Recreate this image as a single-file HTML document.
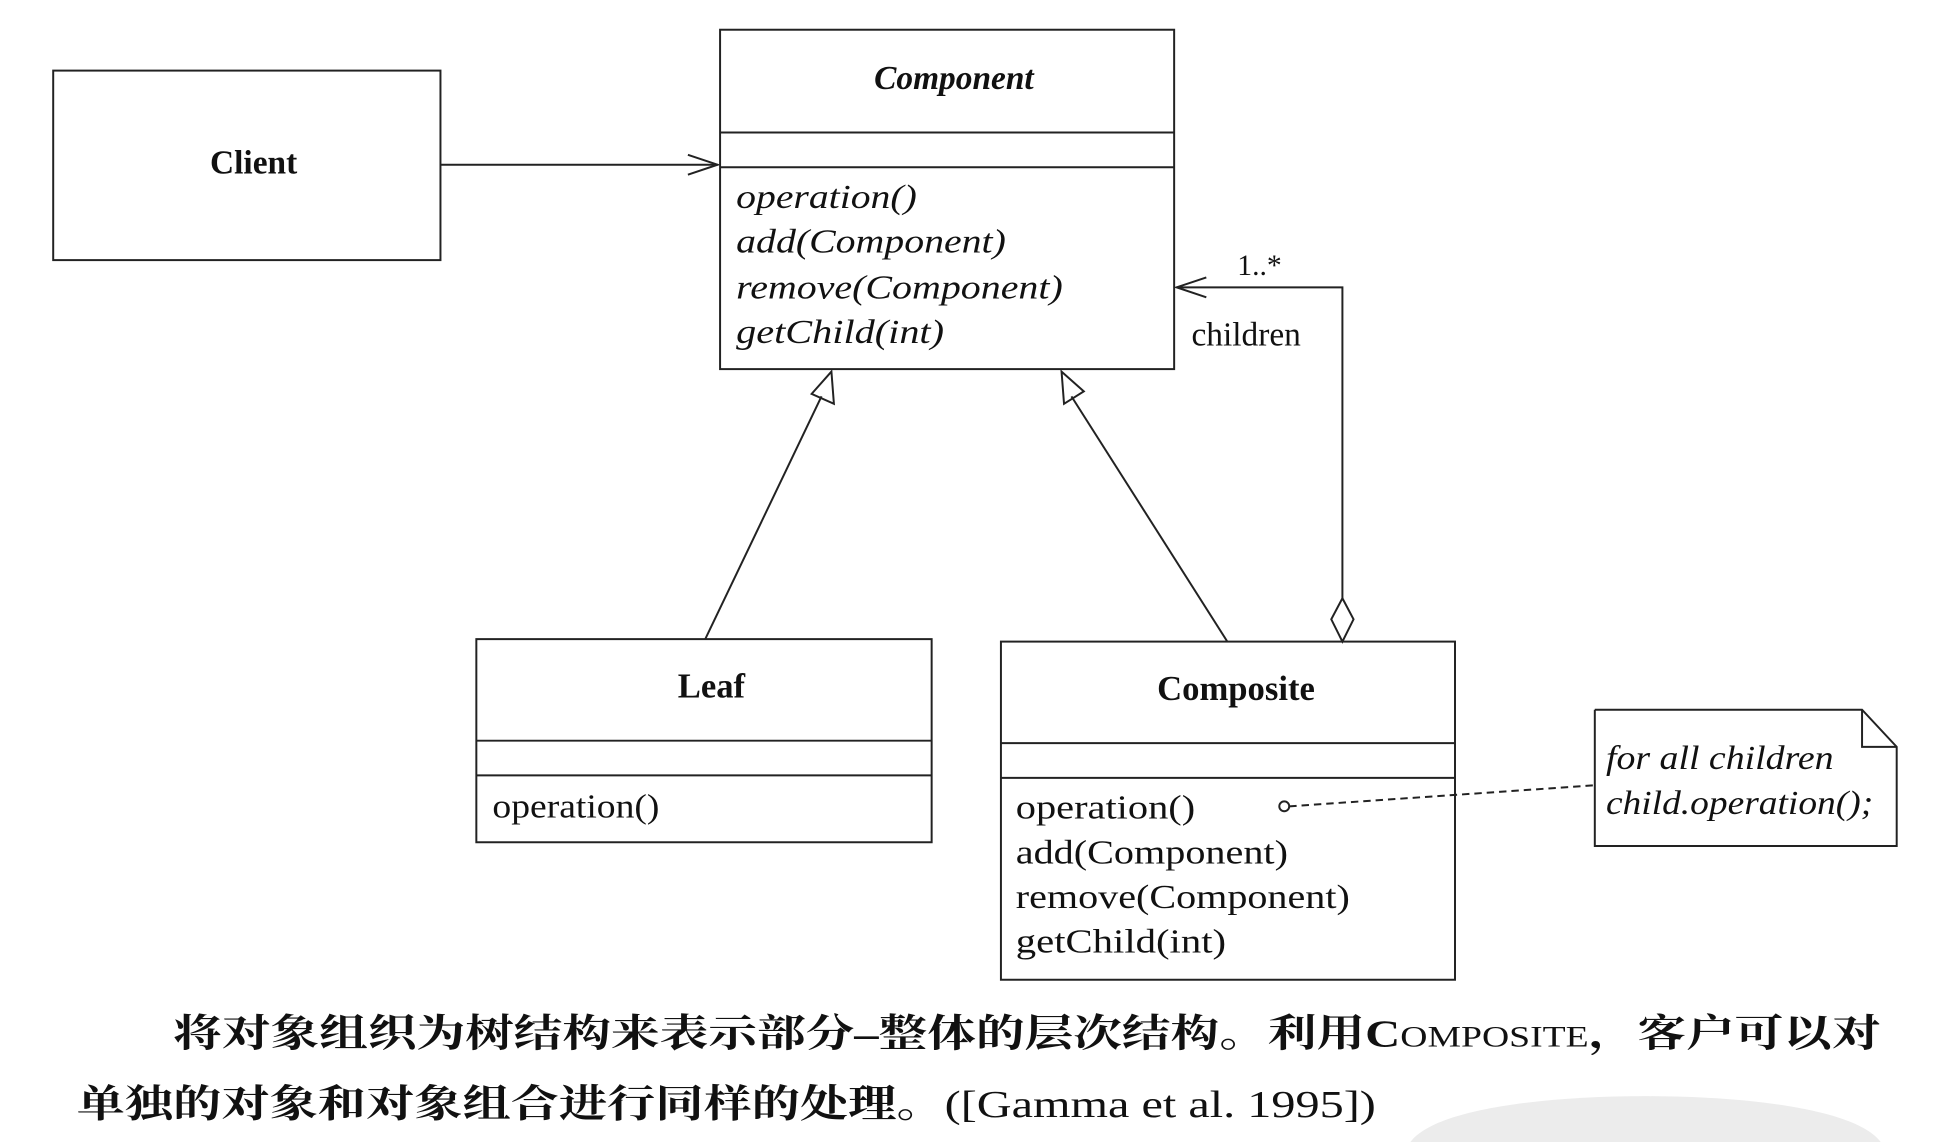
<!DOCTYPE html>
<html><head><meta charset="utf-8"><style>
html,body{margin:0;padding:0;background:#fff;overflow:hidden;width:1940px;height:1142px;}
svg{display:block;}
text{font-family:"Liberation Serif","Noto Serif CJK SC",serif;fill:#111;}
</style></head><body>
<svg width="1940" height="1142" viewBox="0 0 1568 922" preserveAspectRatio="none" xmlns="http://www.w3.org/2000/svg">
<path d="M1140,922 C1160,895 1250,885 1330,885 C1410,885 1500,895 1520,922 Z" fill="#ececec"/>
<g fill="none" stroke="#222" stroke-width="1.6">
<rect x="43" y="57" width="313" height="153"/>
<rect x="582" y="24" width="367" height="274"/>
<line x1="582" y1="107" x2="949" y2="107"/>
<line x1="582" y1="135" x2="949" y2="135"/>
<rect x="385" y="516" width="368" height="164"/>
<line x1="385" y1="598" x2="753" y2="598"/>
<line x1="385" y1="626" x2="753" y2="626"/>
<rect x="809" y="518" width="367" height="273"/>
<line x1="809" y1="600" x2="1176" y2="600"/>
<line x1="809" y1="628" x2="1176" y2="628"/>
<line x1="356" y1="133" x2="580" y2="133"/>
<polyline points="556,125 580,133 556,141"/>
<line x1="570" y1="516" x2="664" y2="320"/>
<polygon points="672,300 674,326 656,318"/>
<line x1="992" y1="518" x2="866" y2="320"/>
<polygon points="858,300 876,316 860,326"/>
<polygon points="1085,483 1094,500 1085,518 1076,500"/>
<polyline points="1085,483 1085,232 951,232"/>
<polyline points="975,224 951,232 975,240"/>
<polyline points="1289,573 1505,573 1533,603 1533,683 1289,683 1289,573"/>
<polyline points="1505,573 1505,603 1533,603"/>
<circle cx="1038" cy="651" r="4"/>
<line x1="1042" y1="651" x2="1289" y2="634" stroke-dasharray="6,4"/>
</g>
<text x="205" y="140" font-size="27" font-weight="bold" text-anchor="middle">Client</text>
<text x="771" y="72" font-size="27" font-weight="bold" font-style="italic" text-anchor="middle">Component</text>
<g font-size="27" font-style="italic">
<text x="595" y="168" textLength="146" lengthAdjust="spacingAndGlyphs">operation()</text>
<text x="595" y="204" textLength="218" lengthAdjust="spacingAndGlyphs">add(Component)</text>
<text x="595" y="241" textLength="264" lengthAdjust="spacingAndGlyphs">remove(Component)</text>
<text x="595" y="277" textLength="168" lengthAdjust="spacingAndGlyphs">getChild(int)</text>
</g>
<text x="1000" y="222" font-size="24">1..*</text>
<text x="963" y="279" font-size="27">children</text>
<text x="575" y="563" font-size="28" font-weight="bold" text-anchor="middle">Leaf</text>
<text x="398" y="660" font-size="27" textLength="135" lengthAdjust="spacingAndGlyphs">operation()</text>
<text x="999" y="565" font-size="28" font-weight="bold" text-anchor="middle">Composite</text>
<g font-size="27">
<text x="821" y="661" textLength="145" lengthAdjust="spacingAndGlyphs">operation()</text>
<text x="821" y="697" textLength="220" lengthAdjust="spacingAndGlyphs">add(Component)</text>
<text x="821" y="733" textLength="270" lengthAdjust="spacingAndGlyphs">remove(Component)</text>
<text x="821" y="769" textLength="170" lengthAdjust="spacingAndGlyphs">getChild(int)</text>
</g>
<g font-size="27" font-style="italic">
<text x="1298" y="621" textLength="184" lengthAdjust="spacingAndGlyphs">for all children</text>
<text x="1298" y="657" textLength="216" lengthAdjust="spacingAndGlyphs">child.operation();</text>
</g>
<text x="140" y="845" font-size="31" font-weight="bold" textLength="1380" lengthAdjust="spacingAndGlyphs">将对象组织为树结构来表示部分–整体的层次结构。利用C<tspan font-size="24" font-weight="normal">OMPOSITE</tspan>，客户可以对</text>
<text x="62" y="902" font-size="31" font-weight="bold" textLength="1050" lengthAdjust="spacingAndGlyphs">单独的对象和对象组合进行同样的处理。<tspan font-weight="normal">([Gamma et al. 1995])</tspan></text>
</svg>
</body></html>
